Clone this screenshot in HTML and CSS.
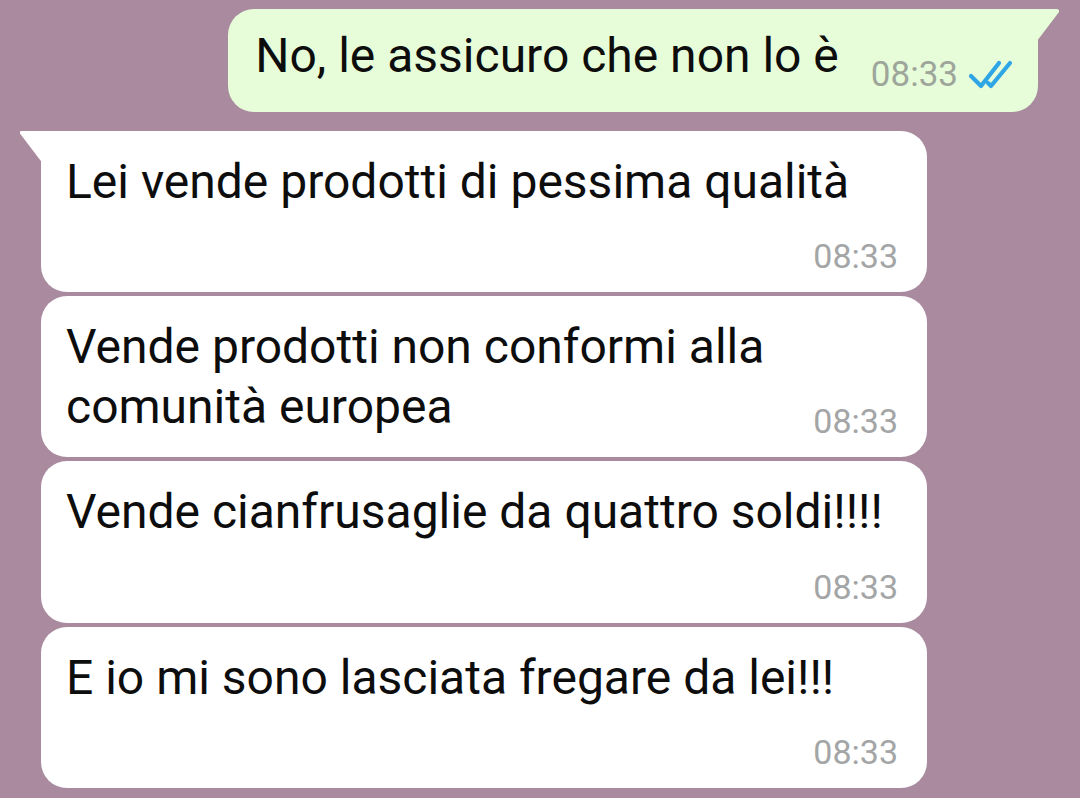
FILE: index.html
```html
<!DOCTYPE html>
<html lang="it">
<head>
    <meta charset="UTF-8">
    <meta name="viewport" content="width=device-width, initial-scale=1.0">
    <title>Chat</title>
    <link rel="stylesheet" href="styles.css">
</head>
<body>
    <div class="chat">
        <div class="riga uscita">
            <div class="bolla verde coda-destra">
                <p class="testo">No, le assicuro che non lo è<span class="ora">08:33<svg class="spunte" viewBox="0 0 46 30" width="46" height="30">
                        <path d="M3 17 L13 27 L31 4" />
                        <path d="M20 24 L23 27 L42 4" />
                    </svg></span></p>
            </div>
        </div>

        <div class="riga">
            <div class="bolla bianca coda-sinistra">
                <p class="testo">Lei vende prodotti di pessima qualità<span class="ora">08:33</span></p>
            </div>
        </div>
        <div class="riga">
            <div class="bolla bianca">
                <p class="testo">Vende prodotti non conformi alla comunità europea<span class="ora">08:33</span></p>
            </div>
        </div>
        <div class="riga">
            <div class="bolla bianca">
                <p class="testo">Vende cianfrusaglie da quattro soldi!!!!<span class="ora">08:33</span></p>
            </div>
        </div>
        <div class="riga">
            <div class="bolla bianca">
                <p class="testo">E io mi sono lasciata fregare da lei!!!<span class="ora">08:33</span></p>
            </div>
        </div>
    </div>
</body>
</html>
```

FILE: styles.css
```css
body {
    margin: 0;
    background-color: #a98a9e;
    font-family: Roboto, "Noto Sans", sans-serif;
    color: #0d0d0d;
    height: 798px;
    overflow: hidden;
}

.chat {
    display: flex;
    flex-direction: column;
    gap: 4px;
    padding-top: 9px;
}

.riga {
    display: flex;
    padding-left: 41px;
}

.uscita {
    justify-content: flex-end;
    padding-left: 0;
    padding-right: 42px;
    margin-bottom: 15px;
}

.bolla {
    position: relative;
    box-sizing: border-box;
    border-radius: 26px;
}

.bianca {
    background-color: #ffffff;
    width: 886px;
    padding: 21px 29px 14px 25px;
}

.verde {
    background-color: #e7fdd9;
    padding: 16.6px 24px 14.6px 27px;
}

.testo {
    display: flow-root;
    margin: 0;
    font-size: 48px;
    line-height: 60px;
}

.ora {
    float: right;
    margin-top: 22.4px;
    margin-left: 30px;
    font-size: 34px;
    line-height: 44px;
    color: #a3a5a6;
}

.verde .ora {
    margin-top: 27.4px;
    margin-left: 32px;
    font-size: 35px;
    color: #9ea69b;
}

.spunte {
    margin-left: 10px;
    vertical-align: -3px;
    fill: none;
    stroke: #2ea6e6;
    stroke-width: 4.2;
    stroke-linecap: round;
    stroke-linejoin: round;
}

/* code delle bolle */
.coda-sinistra {
    border-top-left-radius: 0;
}

.coda-sinistra::before {
    content: "";
    position: absolute;
    top: 0;
    left: -21px;
    width: 22px;
    height: 32px;
    background-color: #ffffff;
    clip-path: polygon(2px 0, 100% 0, 100% 100%, 0 3px, 0 1px);
}

.coda-destra {
    border-top-right-radius: 0;
}

.coda-destra::after {
    content: "";
    position: absolute;
    top: 0;
    right: -21px;
    width: 22px;
    height: 32px;
    background-color: #e7fdd9;
    clip-path: polygon(0 0, calc(100% - 2px) 0, 100% 1px, 100% 3px, 0 100%);
}
```
